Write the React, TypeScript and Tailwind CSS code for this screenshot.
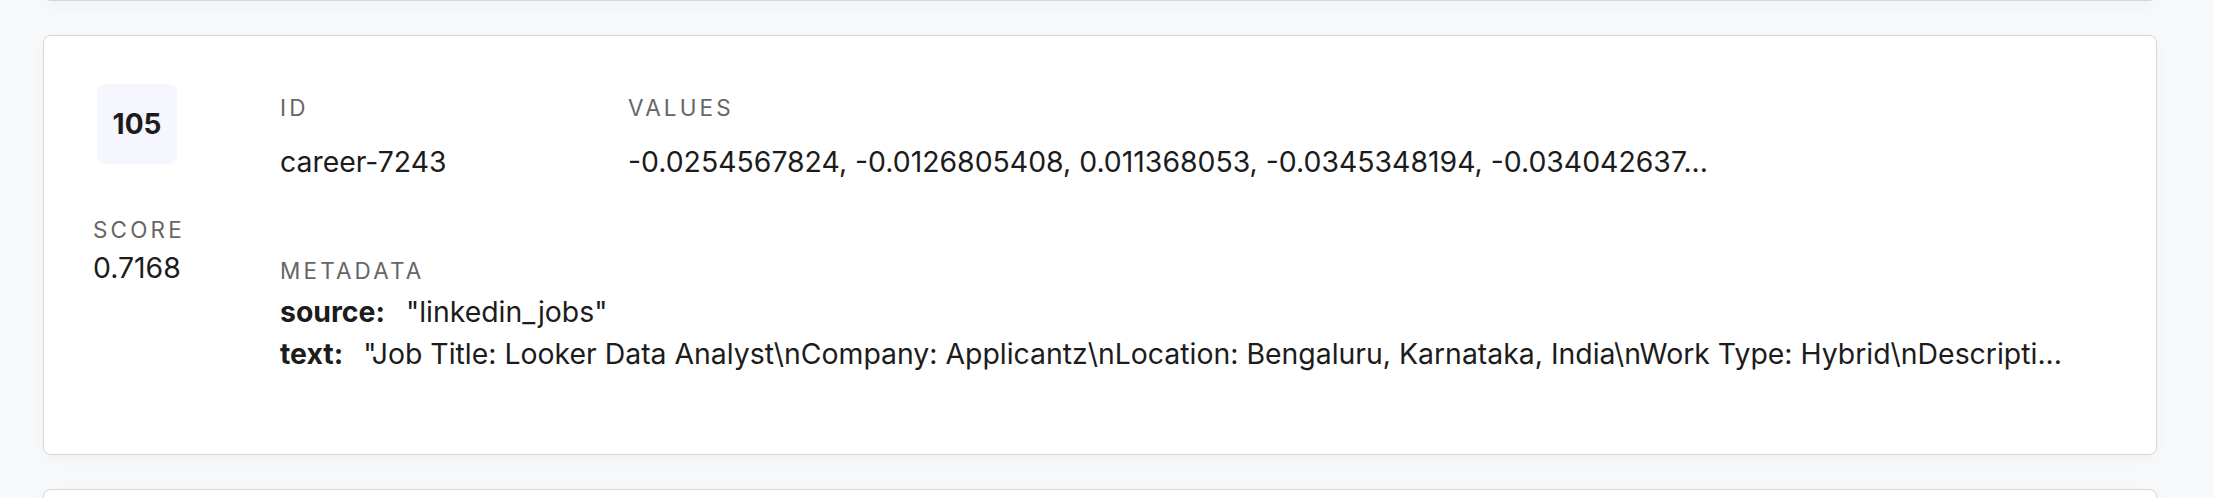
export default function App() {
  const values =
    "-0.0254567824, -0.0126805408, 0.011368053, -0.0345348194, -0.034042637...";
  const text =
    '"Job Title: Looker Data Analyst\\nCompany: Applicantz\\nLocation: Bengaluru, Karnataka, India\\nWork Type: Hybrid\\nDescripti...';
  return (
    <div className="min-h-screen overflow-hidden bg-[#f8f9fa] font-['Inter',sans-serif] text-[#1c1c1c]">
      <div className="ml-[43px] flex w-[2114px] flex-col gap-[34px]">
        <div className="-mt-[19px] h-[20px] rounded-lg border-[1.5px] border-[#d4d8dc] bg-white shadow-[0_4px_20px_rgba(0,0,0,0.04)]" />
        <div className="flex h-[420px] rounded-lg border-[1.5px] border-[#d4d8dc] bg-white px-[49px] pt-[48px] shadow-[0_4px_20px_rgba(0,0,0,0.04)]">
          <div className="flex w-[88px] flex-col items-center">
            <div className="flex h-[80px] w-[80px] items-center justify-center rounded-[8px] bg-[#f6f6fe] text-[28px] font-bold text-[#1c1c1c]">
              105
            </div>
            <div className="mt-[52px] self-start">
              <div className="text-[22.5px] uppercase leading-[28px] tracking-[0.14em] text-[#666666]">
                Score
              </div>
              <div className="mt-[6px] text-[28.4px] leading-[36px]">0.7168</div>
            </div>
          </div>
          <div className="ml-[99px] flex min-w-0 flex-1 flex-col">
            <div className="mt-[10px] flex">
              <div className="w-[348px]">
                <div className="text-[22.5px] uppercase leading-[28px] tracking-[0.14em] text-[#666666]">
                  ID
                </div>
                <div className="mt-[22px] text-[28.4px] leading-[36px]">career-7243</div>
              </div>
              <div>
                <div className="text-[22.5px] uppercase leading-[28px] tracking-[0.14em] text-[#666666]">
                  Values
                </div>
                <div className="mt-[22px] text-[28.4px] leading-[36px]">{values}</div>
              </div>
            </div>
            <div className="mt-[77px]">
              <div className="text-[22.5px] uppercase leading-[28px] tracking-[0.14em] text-[#666666]">
                Metadata
              </div>
              <div className="mt-[9px] flex flex-col gap-[6px] text-[28.4px] leading-[36px]">
                <div className="flex whitespace-nowrap">
                  <span className="mr-[21px] font-bold">source:</span>
                  <span>"linkedin_jobs"</span>
                </div>
                <div className="flex whitespace-nowrap">
                  <span className="mr-[20px] font-bold">text:</span>
                  <span>{text}</span>
                </div>
              </div>
            </div>
          </div>
        </div>
        <div className="h-[20px] rounded-lg border-[1.5px] border-[#d4d8dc] bg-white shadow-[0_4px_20px_rgba(0,0,0,0.04)]" />
      </div>
    </div>
  );
}
